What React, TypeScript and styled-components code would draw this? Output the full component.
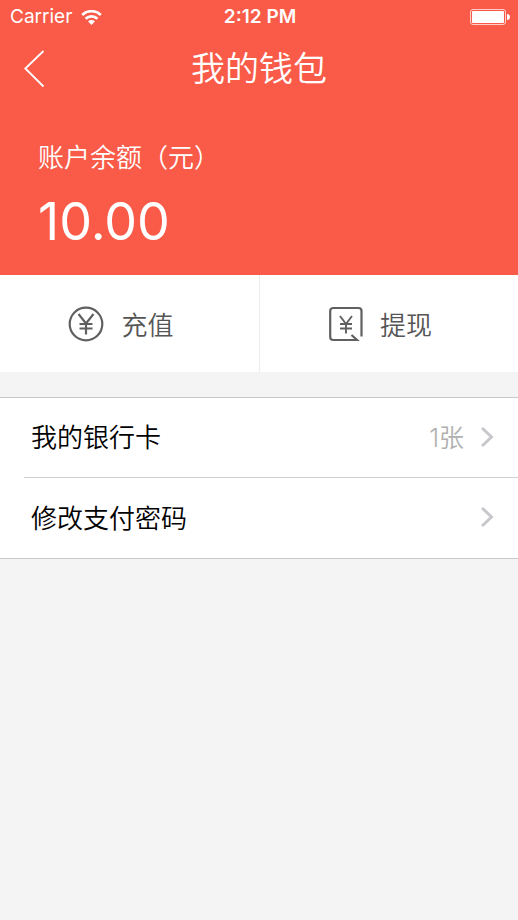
import React from "react";
import styled, { createGlobalStyle } from "styled-components";

const Global = createGlobalStyle`
  * { box-sizing: border-box; }
  body {
    margin: 0;
    background: #f4f4f4;
    font-family: Inter, "Noto Sans CJK SC", sans-serif;
    color: #000;
  }
  button { font: inherit; color: inherit; background: none; border: 0; padding: 0; cursor: pointer; }
`;

const Page = styled.main`
  min-height: 100vh;
  background: #f4f4f4;
`;
const Hero = styled.header`
  background: #f95b48;
  color: #fff;
`;
const StatusBar = styled.div`
  display: grid;
  grid-template-columns: 1fr auto 1fr;
  align-items: center;
  height: 34px;
  padding: 0 8px 0 10px;
  font-size: 19px;
  line-height: 24px;
`;
const Carrier = styled.span`
  display: flex;
  align-items: center;
  gap: 9px;
`;
const Clock = styled.time`
  font-weight: 600;
`;
const Battery = styled.svg`
  justify-self: end;
`;
const NavBar = styled.div`
  display: grid;
  grid-template-columns: 72px 1fr 72px;
  align-items: center;
  height: 70px;
`;
const BackButton = styled.button`
  display: flex;
  padding-left: 24px;
`;
const Title = styled.h1`
  margin: 0;
  text-align: center;
  font-size: 34px;
  line-height: 48px;
  font-weight: 350;
`;
const Balance = styled.section`
  padding: 36px 38px 20px;
`;
const BalanceLabel = styled.div`
  font-size: 26px;
  line-height: 36px;
  font-weight: 350;
`;
const Amount = styled.div`
  margin-top: 12px;
  font-size: 52px;
  line-height: 67px;
`;
const Actions = styled.div`
  display: grid;
  grid-template-columns: 1fr 1fr;
  height: 97px;
  background: #fff;
`;
const Action = styled.button`
  display: flex;
  align-items: center;
  justify-content: center;
  gap: 17px;
  padding-right: 17px;
  font-size: 26px;
  font-weight: 350;
  color: #555;
  & + & { border-left: 1px solid #ececec; }
`;
const List = styled.nav`
  margin-top: 25px;
  padding-left: 24px;
  background: #fff;
  border-top: 1px solid #c8c8cc;
  border-bottom: 1px solid #c8c8cc;
`;
const Row = styled.button`
  display: flex;
  align-items: center;
  width: 100%;
  height: 79px;
  padding: 0 24px 2px 7px;
  font-size: 26px;
  font-weight: 350;
  & + & { border-top: 1px solid #d0d0d2; height: 81px; }
`;
const RowLabel = styled.span`
  padding-bottom: 2px;
`;
const RowValue = styled.span`
  margin-left: auto;
  margin-right: 16px;
  padding-bottom: 2px;
  font-size: 25px;
  font-weight: 350;
  color: #b0b0b0;
`;

const Chevron = () => (
  <svg width="14" height="22" viewBox="0 0 14 22" fill="none" stroke="#c7c7cc" strokeWidth="3" aria-hidden="true">
    <path d="M2 2l9.500 9-9.500 9" />
  </svg>
);

export default function App() {
  return (
    <Page>
      <Global />
      <Hero>
        <StatusBar>
          <Carrier>
            Carrier
            <svg width="21" height="15" viewBox="0 0 21 15" fill="none" stroke="#fff" strokeWidth="2.800" aria-hidden="true">
              <path d="M1.200 5a13.300 13.300 0 0 1 18.600 0M4.600 8.700a8.400 8.400 0 0 1 11.800 0" />
              <path d="M10.500 15l-3.400-3.500a4.800 4.800 0 0 1 6.800 0z" fill="#fff" stroke="none" />
            </svg>
          </Carrier>
          <Clock>2:12 PM</Clock>
          <Battery width="40" height="16" viewBox="0 0 40 16" aria-hidden="true">
            <rect x="0.500" y="0.500" width="35" height="15" rx="2.500" fill="none" stroke="#fff" strokeOpacity="0.700" />
            <rect x="2" y="2" width="32" height="12" rx="1" fill="#fff" />
            <path d="M37 5a3 3 0 0 1 0 6z" fill="#fff" />
          </Battery>
        </StatusBar>
        <NavBar>
          <BackButton aria-label="返回">
            <svg width="22" height="38" viewBox="0 0 22 38" fill="none" stroke="#fff" strokeWidth="1.800" aria-hidden="true">
              <path d="M19.500 1L1.300 18.500l18.200 18" />
            </svg>
          </BackButton>
          <Title>我的钱包</Title>
        </NavBar>
        <Balance>
          <BalanceLabel>账户余额（元）</BalanceLabel>
          <Amount>10.00</Amount>
        </Balance>
      </Hero>
      <Actions>
        <Action>
          <svg width="36" height="36" viewBox="0 0 36 36" fill="none" stroke="#606060" strokeWidth="2.200" aria-hidden="true">
            <circle cx="18" cy="18" r="16.300" />
            <path d="M10.500 8l7.500 9.500 7.500-9.500M18 17v11.500M11.500 18h13M11.500 22.500h13" />
          </svg>
          充值
        </Action>
        <Action>
          <svg width="34" height="36" viewBox="0 0 34 36" fill="none" stroke="#606060" strokeWidth="2.200" aria-hidden="true">
            <path d="M32.500 30.500V5a3 3 0 0 0-3-3H4.200a3 3 0 0 0-3 3v26a3 3 0 0 0 3 3H28l-5.500-5" />
            <path d="M11 10l6 8 6-8M17 18v9.500M11 18h12M11 22.500h12" strokeWidth="1.900" />
          </svg>
          提现
        </Action>
      </Actions>
      <List>
        <Row>
          <RowLabel>我的银行卡</RowLabel>
          <RowValue>1张</RowValue>
          <Chevron />
        </Row>
        <Row>
          <RowLabel>修改支付密码</RowLabel>
          <RowValue />
          <Chevron />
        </Row>
      </List>
    </Page>
  );
}
